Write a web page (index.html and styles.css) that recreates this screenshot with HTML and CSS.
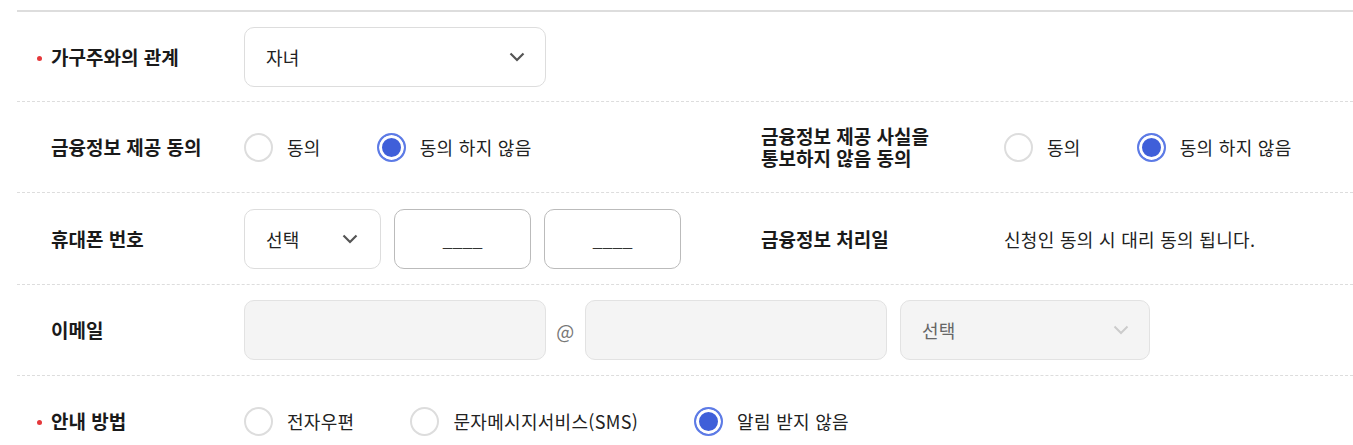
FILE: index.html
```html
<!DOCTYPE html>
<html lang="ko">
<head>
    <meta charset="UTF-8">
    <meta name="viewport" content="width=device-width, initial-scale=1.0">
    <title>가구원 정보</title>
    <link rel="stylesheet" href="styles.css">
</head>
<body>
    <div class="form">
        <div class="row first">
            <div class="label req">가구주와의 관계</div>
            <div class="field wide">
                <div class="select sel-relation">
                    <span>자녀</span>
                    <svg class="chev" width="16" height="10" viewBox="0 0 16 10"><path d="M1.5 1.5 L8 8 L14.5 1.5" fill="none" stroke="#555" stroke-width="2.2"/></svg>
                </div>
            </div>
        </div>

        <div class="row">
            <div class="label">금융정보 제공 동의</div>
            <div class="field radios">
                <label class="radio-item"><span class="radio"></span>동의</label>
                <label class="radio-item"><span class="radio on"></span>동의 하지 않음</label>
            </div>
            <div class="label">금융정보 제공 사실을<br>통보하지 않음 동의</div>
            <div class="field radios">
                <label class="radio-item"><span class="radio"></span>동의</label>
                <label class="radio-item"><span class="radio on"></span>동의 하지 않음</label>
            </div>
        </div>

        <div class="row phone-row">
            <div class="label">휴대폰 번호</div>
            <div class="field phone">
                <div class="select sel-phone">
                    <span>선택</span>
                    <svg class="chev" width="16" height="10" viewBox="0 0 16 10"><path d="M1.5 1.5 L8 8 L14.5 1.5" fill="none" stroke="#555" stroke-width="2.2"/></svg>
                </div>
                <input class="input num" type="text" value="____">
                <input class="input num" type="text" value="____">
            </div>
            <div class="label">금융정보 처리일</div>
            <div class="field">
                <p class="note">신청인 동의 시 대리 동의 됩니다.</p>
            </div>
        </div>

        <div class="row">
            <div class="label">이메일</div>
            <div class="field wide email">
                <input class="input off mail" type="text" disabled>
                <span class="at">@</span>
                <input class="input off mail" type="text" disabled>
                <div class="select off sel-domain">
                    <span>선택</span>
                    <svg class="chev" width="16" height="10" viewBox="0 0 16 10"><path d="M1.5 1.5 L8 8 L14.5 1.5" fill="none" stroke="#ccc" stroke-width="2"/></svg>
                </div>
            </div>
        </div>

        <div class="row">
            <div class="label req">안내 방법</div>
            <div class="field wide radios">
                <label class="radio-item"><span class="radio"></span>전자우편</label>
                <label class="radio-item"><span class="radio"></span>문자메시지서비스(SMS)</label>
                <label class="radio-item"><span class="radio on"></span>알림 받지 않음</label>
            </div>
        </div>
    </div>
</body>
</html>
```

FILE: styles.css
```css
body {
    margin: 0;
    padding: 0;
    background-color: #fff;
    color: #222;
    font-family: 'Noto Sans CJK KR', 'Noto Sans', sans-serif;
    font-size: 18px;
    letter-spacing: 0.3px;
}

.form {
    margin: 10px 0 0 17px;
    border-top: 2px solid #ddd;
}

.row {
    display: grid;
    grid-template-columns: 227px 483px 277px 1fr;
    align-items: center;
    padding: 15px 0;
    min-height: 60px;
    border-bottom: 1px dashed #ddd;
}

.row.first {
    padding-bottom: 14px;
}

.row.phone-row {
    padding-top: 16px;
}

.label {
    padding-left: 34px;
    font-size: 19px;
    font-weight: bold;
    color: #1a1a1a;
    line-height: 1.15;
    letter-spacing: 0;
}

/* 필수 항목 표시 */
.label.req {
    padding-left: 20px;
}
.label.req::before {
    content: '';
    display: inline-block;
    width: 5px;
    height: 5px;
    border-radius: 50%;
    background-color: #e5383b;
    margin-right: 9px;
    vertical-align: middle;
    position: relative;
    top: -1px;
}

.field {
    display: flex;
    align-items: center;
}

.field.wide {
    grid-column: 2 / -1;
}

.select {
    box-sizing: border-box;
    height: 60px;
    display: flex;
    align-items: center;
    justify-content: space-between;
    padding: 0 21px;
    border: 1px solid #ddd;
    border-radius: 10px;
    background-color: #fff;
    color: #222;
}

.sel-relation {
    width: 302px;
    padding-right: 20px;
}

.sel-phone {
    width: 137px;
    padding-right: 22px;
}

.sel-domain {
    width: 250px;
    padding-right: 20px;
}

.phone {
    gap: 13px;
}

.input {
    box-sizing: border-box;
    height: 60px;
    border: 1px solid #bbb;
    border-radius: 10px;
    background-color: #fff;
    font-family: inherit;
    font-size: 18px;
    color: #333;
    padding: 0 10px;
    outline: none;
}

.input.num {
    width: 137px;
    text-align: center;
}

.input.off,
.select.off {
    background-color: #f4f4f4;
    border-color: #e2e2e2;
    color: #666;
}

.input.mail {
    width: 302px;
}

.at {
    width: 39px;
    text-align: center;
    color: #777;
    font-size: 19px;
}

.email .sel-domain {
    margin-left: 13px;
}

.radios {
    gap: 56px;
}

.radio-item {
    display: flex;
    align-items: center;
    gap: 14px;
    cursor: pointer;
    white-space: nowrap;
}

.radio {
    box-sizing: border-box;
    width: 29px;
    height: 29px;
    border: 2px solid #ddd;
    border-radius: 50%;
    background-color: #fff;
}

.radio.on {
    border-color: #5d7be6;
    background-color: #3f5fd9;
    box-shadow: inset 0 0 0 3px #fff;
}

.note {
    margin: 0;
}
```
